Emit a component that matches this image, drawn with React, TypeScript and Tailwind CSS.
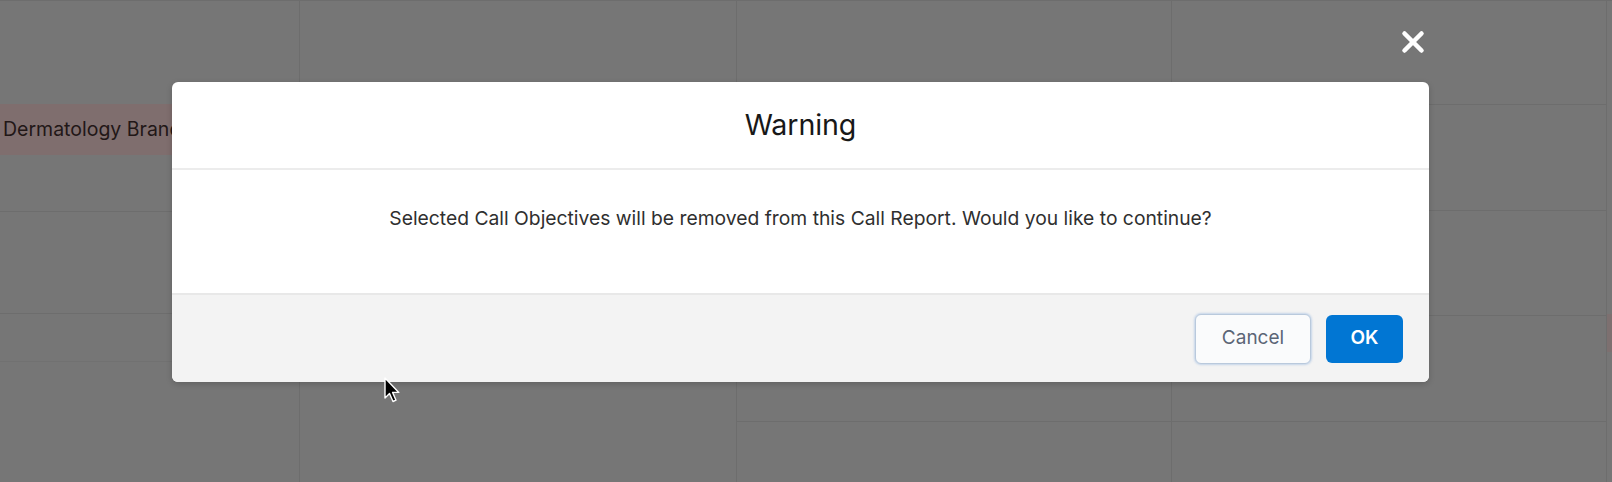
import { X } from 'lucide-react';

const line = 'border-[#6d6d6d]';

const Cursor = () => (
  <svg width="18" height="28" viewBox="0 0 18 28" className="absolute left-[383px] top-[376px]">
    <path
      d="M2 2 L2 22 L6.5 17.5 L10 25.5 L13 24.2 L9.6 16.4 L15.8 16.4 Z"
      fill="#000"
      stroke="#fff"
      strokeWidth="1.4"
      strokeLinejoin="round"
    />
  </svg>
);

export default function App() {
  return (
    <div className="relative w-[1612px] h-[482px] overflow-hidden bg-[#767676] font-['Inter','Liberation_Sans',sans-serif]">
      {/* page behind the backdrop */}
      <div className="flex h-full border-t border-[#6d6d6d]">
        <div className={`w-[300px] shrink-0 flex flex-col border-r ${line}`}>
          <div className="h-[103px]" />
          <div className="h-[51px] bg-[#7f6e6e] flex items-center pl-[3px] text-[19.5px] text-[#221717] whitespace-nowrap">
            Dermatology Brand
          </div>
          <div className={`h-[57px] border-b ${line}`} />
          <div className={`h-[102px] border-b ${line}`} />
          <div className="h-[48px] border-b border-[#717171]" />
        </div>
        <div className={`w-[437px] shrink-0 border-r ${line}`} />
        <div className={`w-[435px] shrink-0 border-r ${line}`}>
          <div className={`h-[421px] border-b ${line}`} />
        </div>
        <div className={`w-[435px] shrink-0 flex flex-col border-r ${line}`}>
          <div className={`h-[104px] border-b ${line}`} />
          <div className={`h-[106px] border-b ${line}`} />
          <div className={`h-[105px] border-b ${line}`} />
          <div className={`h-[106px] border-b ${line}`} />
        </div>
        <div className="flex-1 flex flex-col">
          <div className="h-[313px]" />
          <div className="h-[38px] bg-[#7d7070]" />
        </div>
      </div>

      {/* close */}
      <button className="absolute left-[1396px] top-[25px] w-[34px] h-[34px] flex items-center justify-center text-white">
        <X size={40} strokeWidth={3.2} />
      </button>

      {/* modal */}
      <div className="absolute left-[172px] top-[82px] w-[1257px] h-[300px] bg-white rounded-[6px] shadow-[0_2px_6px_rgba(0,0,0,0.18)] flex flex-col overflow-hidden">
        <div className="h-[88px] shrink-0 flex items-center justify-center border-b-2 border-[#ececec]">
          <h2 className="text-[28.6px] text-[#181818] leading-none tracking-[-0.1px]">Warning</h2>
        </div>
        <div className="h-[123px] shrink-0 flex justify-center pt-[34px]">
          <p className="text-[19.3px] leading-[28px] text-[#2f2f2f]">
            Selected Call Objectives will be removed from this Call Report. Would you like to continue?
          </p>
        </div>
        <div className="flex-1 bg-[#f3f3f3] border-t-2 border-[#e8e8e8] flex items-center justify-end gap-[15px] pr-[26px]">
          <button className="w-[116px] h-[50px] rounded-[6px] bg-[#fafbfc] border border-[#b9c9dc] shadow-[0_0_2px_1px_rgba(160,190,225,0.55)] text-[19px] text-[#5b6576]">
            Cancel
          </button>
          <button className="w-[77px] h-[48px] rounded-[6px] bg-[#0176d3] text-[19px] font-semibold text-white">
            OK
          </button>
        </div>
      </div>

      <Cursor />
    </div>
  );
}
